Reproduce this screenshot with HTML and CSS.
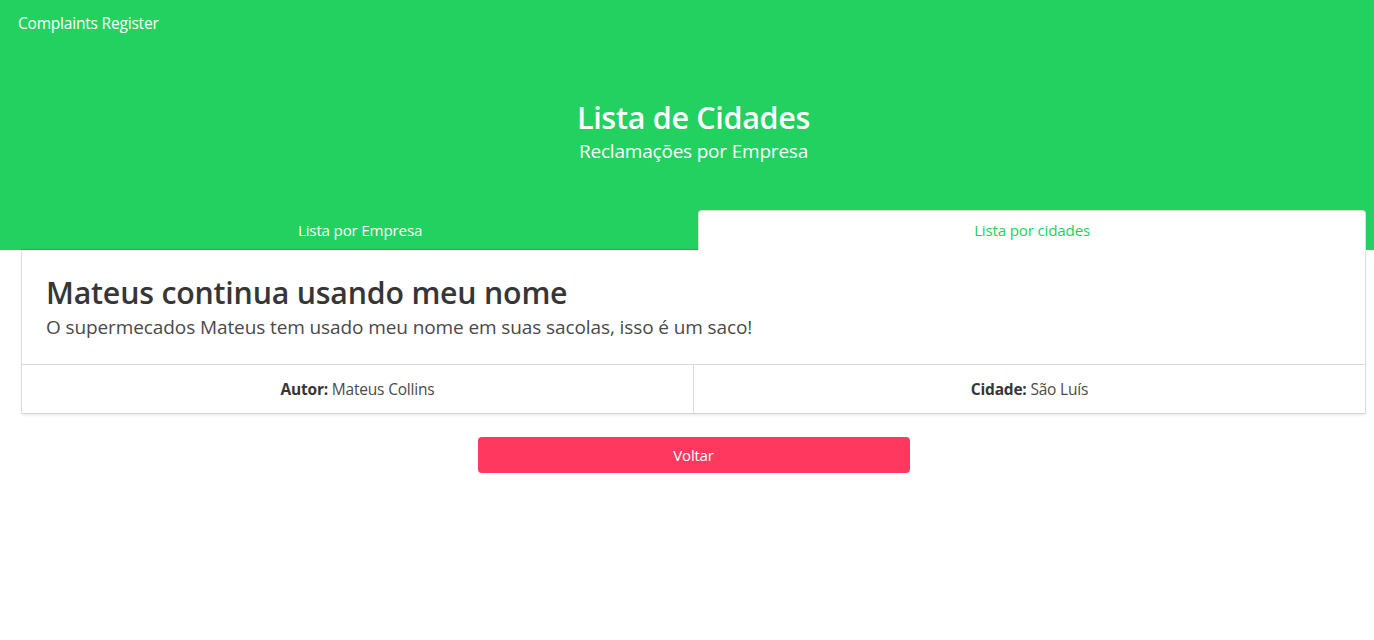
FILE: index.html
```html
<!DOCTYPE html>
<html lang="pt">
<head>
<meta charset="utf-8">
<title>Complaints Register</title>
<link rel="stylesheet" href="styles.css">
</head>
<body>
<header class="hero">
  <nav class="navbar">
    <a class="brand" href="#">Complaints Register</a>
  </nav>
  <div class="hero-body">
    <h1 class="hero-title">Lista de Cidades</h1>
    <h2 class="hero-subtitle">Reclamações por Empresa</h2>
  </div>
  <div class="tabs">
    <ul>
      <li><a href="#">Lista por Empresa</a></li>
      <li class="is-active"><a href="#">Lista por cidades</a></li>
    </ul>
  </div>
</header>
<main class="page">
  <article class="card">
    <div class="card-content">
      <p class="card-title">Mateus continua usando meu nome</p>
      <p class="card-subtitle">O supermecados Mateus tem usado meu nome em suas sacolas, isso é um saco!</p>
    </div>
    <footer class="card-footer">
      <p class="card-footer-item"><strong>Autor:</strong>&nbsp;Mateus Collins</p>
      <p class="card-footer-item"><strong>Cidade:</strong>&nbsp;São Luís</p>
    </footer>
  </article>
  <div class="actions">
    <a class="button-danger" href="#">Voltar</a>
  </div>
</main>
</body>
</html>
```
FILE: styles.css
```css
* { box-sizing: border-box; }
html, body { margin: 0; padding: 0; background: #fff; }
body {
  font-family: "Open Sans", "Noto Sans", "Liberation Sans", sans-serif;
  font-size: 16px;
  color: #4a4a4a;
}
a { text-decoration: none; }
h1, h2, p, ul { margin: 0; padding: 0; }

.hero {
  background: #23d160;
  color: #fff;
  display: flex;
  flex-direction: column;
}
.navbar {
  height: 46px;
  display: flex;
  align-items: center;
  padding-left: 18px;
}
.brand {
  color: #fff;
  font-size: 15.5px;
  letter-spacing: -0.2px;
}
.hero-body {
  padding: 53px 9px 0 22px;
  height: 164px;
  text-align: center;
}
.hero-title {
  font-size: 30.5px;
  font-weight: 600;
  line-height: 36px;
  letter-spacing: -0.3px;
}
.hero-subtitle {
  margin-top: 4px;
  font-size: 19px;
  font-weight: 400;
  line-height: 25px;
  letter-spacing: -0.2px;
}
.tabs {
  padding: 0 8px 0 22px;
}
.tabs ul {
  list-style: none;
  display: flex;
}
.tabs li { flex: 1 0 auto; }
.tabs a {
  display: flex;
  align-items: center;
  justify-content: center;
  height: 40px;
  padding: 0 16px;
  font-size: 15.2px;
  letter-spacing: -0.2px;
  color: #fff;
  border: 1px solid transparent;
  border-bottom: 1px solid rgba(0,0,0,0.08);
  border-radius: 4px 4px 0 0;
}
.tabs li.is-active a {
  background: #fff;
  color: #23d160;
  border-color: #dbdbdb;
  border-bottom-color: transparent;
}

.page {
  padding: 0 9px 0 22px;
}
.card {
  background: #fff;
  box-shadow: 0 2px 3px rgba(10,10,10,0.1), 0 0 0 1px rgba(10,10,10,0.1);
}
.card-content {
  padding: 25px 24px 24px;
}
.card-title {
  color: #363636;
  font-size: 30.3px;
  font-weight: 600;
  line-height: 36px;
  letter-spacing: -0.2px;
}
.card-subtitle {
  margin-top: 4px;
  font-size: 19px;
  line-height: 25px;
  letter-spacing: -0.1px;
}
.card-footer {
  display: flex;
  border-top: 1px solid #dbdbdb;
}
.card-footer-item {
  flex: 1;
  display: flex;
  justify-content: center;
  align-items: center;
  padding: 12px;
  line-height: 24px;
  font-size: 15.5px;
  letter-spacing: -0.2px;
}
.card-footer-item + .card-footer-item {
  border-left: 1px solid #dbdbdb;
}
.card-footer-item strong {
  color: #363636;
  font-weight: 700;
}
.actions {
  display: flex;
  justify-content: center;
  margin-top: 24px;
}
.button-danger {
  width: 432px;
  height: 36px;
  display: flex;
  align-items: center;
  justify-content: center;
  background: #ff3860;
  color: #fff;
  border-radius: 4px;
  font-size: 15px;
  letter-spacing: -0.2px;
}
```
